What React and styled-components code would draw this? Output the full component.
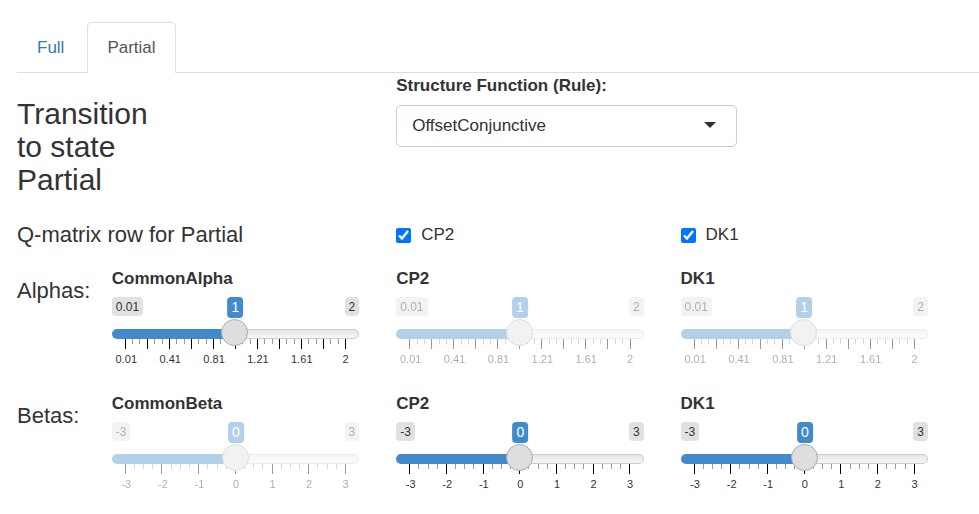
import React, { useId, useState } from "react";
import styled, { createGlobalStyle } from "styled-components";

const GlobalStyle = createGlobalStyle`
  *, *::before, *::after { box-sizing: border-box; }
  body {
    margin: 0;
    background: #fff;
    color: #333;
    font-family: "Liberation Sans", Arial, sans-serif;
    font-size: 17px;
    line-height: 25px;
  }
`;

const Page = styled.div`
  padding: 22px 0 0 17px;
`;

const Tabs = styled.nav`
  display: flex;
  gap: 3px;
  border-bottom: 1px solid #ddd;
`;

const Tab = styled.a`
  padding: 12px 19px;
  margin-bottom: -1px;
  border: 1px solid ${(p) => (p.$active ? "#ddd" : "transparent")};
  border-bottom-color: ${(p) => (p.$active ? "#fff" : "transparent")};
  border-radius: 5px 5px 0 0;
  background: ${(p) => (p.$active ? "#fff" : "transparent")};
  color: ${(p) => (p.$active ? "#555" : "#337ab7")};
  text-decoration: none;
`;

const Row = styled.section`
  display: grid;
  grid-template-columns: 1fr 3fr 3fr 3fr;
  margin-right: 14px;
  min-height: ${(p) => p.$minHeight || 0}px;
`;

const Cell = styled.div`
  min-width: 0;
  grid-column: span ${(p) => p.$span || 1};
  padding-right: 37px;
`;

const Title = styled.h3`
  max-width: 152px;
  margin: 24px 0 14px;
  font-size: 30px;
  font-weight: 400;
  line-height: 33px;
`;

const RowHeading = styled.h4`
  margin: 12px 0;
  font-size: 22px;
  font-weight: 400;
  line-height: 25px;
  white-space: nowrap;
`;

const FieldLabel = styled.label`
  display: block;
  margin-bottom: 6px;
  font-weight: 700;
`;

const RuleField = styled.div`
  grid-column: span 2;
`;

const SelectBox = styled.div`
  display: grid;
  align-items: center;
  width: 60%;
  margin-top: 7px;
`;

const RuleSelect = styled.select`
  grid-area: 1 / 1;
  width: 100%;
  height: 42px;
  padding: 0 36px 2px 15px;
  appearance: none;
  border: 1px solid #ccc;
  border-radius: 5px;
  background: #fff;
  color: #333;
  font: inherit;
`;

const Caret = styled.svg`
  grid-area: 1 / 1;
  justify-self: end;
  margin: 0 21px 2px 0;
  pointer-events: none;
`;

const CheckLabel = styled.label`
  display: flex;
  align-items: center;
  gap: 10px;
  margin-top: 12px;
`;

const Checkbox = styled.input`
  width: 15px;
  height: 15px;
  margin: 2px 0 0;
  accent-color: #0075ff;
`;

const SliderBody = styled.div`
  opacity: ${(p) => (p.$disabled ? 0.4 : 1)};
`;

const Readouts = styled.div`
  position: relative;
  display: flex;
  justify-content: space-between;
  align-items: flex-start;
  height: 22px;
`;

const Limit = styled.span`
  padding: 2px 4px 0;
  border-radius: 4px;
  background: #e1e1e1;
  font-size: 12px;
  line-height: 17px;
`;

const Bubble = styled.output`
  position: absolute;
  top: 0;
  left: calc(14px + (100% - 27px) * var(--ratio));
  transform: translateX(-50%);
  padding: 0 4px;
  border-radius: 4px;
  background: #428bca;
  color: #fff;
  font-size: 14px;
  line-height: 21px;
`;

const Range = styled.input`
  position: relative;
  z-index: 1;
  display: block;
  width: 100%;
  height: 30px;
  margin: 0;
  appearance: none;
  background: transparent;

  &::-webkit-slider-runnable-track {
    height: 10px;
    border: 1px solid transparent;
    border-radius: 5px;
    background:
      linear-gradient(#428bca, #428bca) 0 0 / calc(13px + (100% - 27px) * var(--ratio)) 100% no-repeat border-box,
      linear-gradient(#dedede -50%, #fff 150%) padding-box,
      linear-gradient(#ccc, #ccc) border-box;
  }

  &::-webkit-slider-thumb {
    appearance: none;
    width: 27px;
    height: 27px;
    margin: -11px -1px 0 0;
    border: 1px solid #ababab;
    border-radius: 50%;
    background: #dedede;
  }
`;

const Ticks = styled.div`
  display: flex;
  justify-content: space-between;
  height: 10px;
  margin: -10px 13px 0;
`;

const Tick = styled.span`
  width: 1px;
  height: ${(p) => (p.$major ? 10 : 5)}px;
  background: ${(p) => (p.$major ? "#000" : "#999")};
`;

const Scale = styled.div`
  display: flex;
  justify-content: space-between;
  margin: 2px 13px 0 14px;
  font-size: 11px;
  line-height: 16px;
`;

const ScaleLabel = styled.span`
  display: flex;
  justify-content: center;
  width: 1px;
  white-space: nowrap;
`;

const ALPHA = {
  min: 0.01,
  max: 2,
  value: 1,
  step: 0.01,
  intervals: 30,
  major: 3,
  labels: ["0.01", "0.41", "0.81", "1.21", "1.61", "2"],
};

const BETA = {
  min: -3,
  max: 3,
  value: 0,
  step: 0.1,
  intervals: 24,
  major: 4,
  labels: ["-3", "-2", "-1", "0", "1", "2", "3"],
};

function Slider({ label, kind, disabled }) {
  const id = useId();
  const [value, setValue] = useState(kind.value);
  const ratio = (value - kind.min) / (kind.max - kind.min);
  return (
    <Cell>
      <FieldLabel htmlFor={id}>{label}</FieldLabel>
      <SliderBody $disabled={disabled} style={{ "--ratio": ratio }}>
        <Readouts>
          <Limit>{kind.min}</Limit>
          <Limit>{kind.max}</Limit>
          <Bubble htmlFor={id}>{value}</Bubble>
        </Readouts>
        <Range
          id={id}
          type="range"
          min={kind.min}
          max={kind.max}
          step={kind.step}
          value={value}
          disabled={disabled}
          onChange={(e) => setValue(Number(e.target.value))}
        />
        <Ticks aria-hidden="true">
          {Array.from({ length: kind.intervals + 1 }, (_, i) => (
            <Tick key={i} $major={i % kind.major === 0} />
          ))}
        </Ticks>
        <Scale aria-hidden="true">
          {kind.labels.map((text) => (
            <ScaleLabel key={text}>{text}</ScaleLabel>
          ))}
        </Scale>
      </SliderBody>
    </Cell>
  );
}

function Check({ label }) {
  const [checked, setChecked] = useState(true);
  return (
    <Cell>
      <CheckLabel>
        <Checkbox type="checkbox" checked={checked} onChange={(e) => setChecked(e.target.checked)} />
        {label}
      </CheckLabel>
    </Cell>
  );
}

export default function App() {
  return (
    <>
      <GlobalStyle />
      <Page>
        <Tabs>
          <Tab href="#full">Full</Tab>
          <Tab href="#partial" $active aria-current="page">Partial</Tab>
        </Tabs>
        <main>
          <Row>
            <Cell $span={2}>
              <Title>Transition to state Partial</Title>
            </Cell>
            <RuleField>
              <FieldLabel htmlFor="rule">Structure Function (Rule):</FieldLabel>
              <SelectBox>
                <RuleSelect id="rule" defaultValue="OffsetConjunctive">
                  <option>OffsetConjunctive</option>
                </RuleSelect>
                <Caret width="12" height="6" viewBox="0 0 12 6" aria-hidden="true">
                  <path d="M0 0h12L6 6z" fill="#333" />
                </Caret>
              </SelectBox>
            </RuleField>
          </Row>
          <Row $minHeight={56}>
            <Cell $span={2}>
              <RowHeading>Q-matrix row for Partial</RowHeading>
            </Cell>
            <Check label="CP2" />
            <Check label="DK1" />
          </Row>
          <Row $minHeight={125}>
            <RowHeading>Alphas:</RowHeading>
            <Slider label="CommonAlpha" kind={ALPHA} />
            <Slider label="CP2" kind={ALPHA} disabled />
            <Slider label="DK1" kind={ALPHA} disabled />
          </Row>
          <Row>
            <RowHeading>Betas:</RowHeading>
            <Slider label="CommonBeta" kind={BETA} disabled />
            <Slider label="CP2" kind={BETA} />
            <Slider label="DK1" kind={BETA} />
          </Row>
        </main>
      </Page>
    </>
  );
}
